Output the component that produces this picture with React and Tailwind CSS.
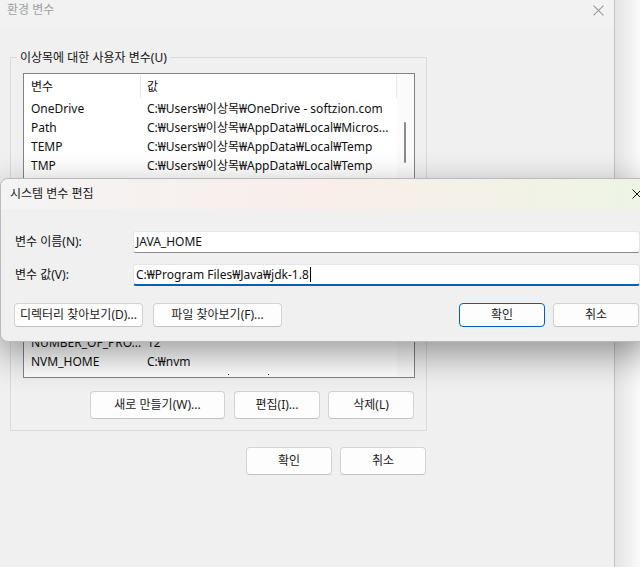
import React from "react";

const F = "font-['Noto_Sans','Noto_Sans_CJK_KR',sans-serif]";

function Btn({ children, className = "", primary = false }) {
  const border = primary
    ? "border-[#005fb8]"
    : "border-[#d3d3d3] border-b-[#c2c2c2]";
  return (
    <div
      className={`flex items-center justify-center bg-[#fdfdfd] border ${border} rounded-[4px] text-[12px] text-[#1b1b1b] shrink-0 ${className}`}
    >
      {children}
    </div>
  );
}

function XIcon({ color = "#000", size = 10 }) {
  return (
    <svg width={size} height={size} viewBox="0 0 10 10" fill="none">
      <path d="M0.5 0.5L9.5 9.5M9.5 0.5L0.5 9.5" stroke={color} strokeWidth="1" />
    </svg>
  );
}

function Row({ name, value }) {
  return (
    <div className="h-[19px] flex items-center shrink-0 whitespace-nowrap">
      <div className="w-[117px] pl-[7px] overflow-hidden">{name}</div>
      <div className="flex-1 pl-[6px] overflow-hidden">{value}</div>
    </div>
  );
}

export default function App() {
  return (
    <div className={`relative w-[640px] h-[567px] overflow-hidden flex bg-[#f5f5f5] text-[12px] text-[#111] ${F}`}>
      {/* background window */}
      <div className="w-[615px] h-full bg-[#f0f0f0] border-r border-[#c4c4c4] flex flex-col shrink-0">
        <div className="h-[27px] bg-[#f2f2f2] flex items-start justify-between pl-[7px] pr-[10px] shrink-0">
          <span className="mt-[2px] leading-[16px] text-[#a0a0a0] text-[12px]">환경 변수</span>
          <div className="mt-[5px]">
            <XIcon color="#9a9a9a" size={11} />
          </div>
        </div>

        {/* group box */}
        <div className="relative mt-[30px] ml-[10px] w-[417px] h-[374px] border border-[#dadada] flex flex-col pt-[15px] pl-[12px] pr-[12px] shrink-0">
          <span className="absolute left-[6px] -top-[8px] px-[3px] leading-[16px] bg-[#f0f0f0]">
            이상목에 대한 사용자 변수(U)
          </span>
          {/* list */}
          <div className="w-[392px] h-[305px] border border-[#838383] bg-white flex overflow-hidden shrink-0">
            <div className="flex-1 flex flex-col min-w-0">
              <div className="h-[25px] flex items-stretch shrink-0">
                <div className="w-[117px] pl-[7px] flex items-center border-r border-[#e8e8e8] my-[1px]">변수</div>
                <div className="flex-1 pl-[6px] flex items-center border-r border-[#e8e8e8] my-[1px]">값</div>
              </div>
              <Row name="OneDrive" value="C:₩Users₩이상목₩OneDrive - softzion.com" />
              <Row name="Path" value="C:₩Users₩이상목₩AppData₩Local₩Micros..." />
              <Row name="TEMP" value="C:₩Users₩이상목₩AppData₩Local₩Temp" />
              <Row name="TMP" value="C:₩Users₩이상목₩AppData₩Local₩Temp" />
              <div className="flex-1" />
              <Row name="NUMBER_OF_PRO..." value="12" />
              <Row name="NVM_HOME" value="C:₩nvm" />
              <div className="h-[6px] shrink-0 flex items-end">
                <span className="ml-[204px] mb-[2px] w-[1px] h-[1px] bg-[#333]" />
                <span className="ml-[39px] mb-[2px] w-[1px] h-[1px] bg-[#333]" />
              </div>
            </div>
            <div className="w-[17px] bg-[#fbfbfb] flex flex-col shrink-0 pt-[48px]">
              <div className="ml-[7px] w-[2px] h-[41px] rounded-full bg-[#8a8a8a]" />
            </div>
          </div>
          {/* buttons */}
          <div className="mt-[13px] flex justify-end">
            <Btn className="w-[135px] h-[28px]">새로 만들기(W)...</Btn>
            <Btn className="w-[86px] h-[28px] ml-[9px]">편집(I)...</Btn>
            <Btn className="w-[86px] h-[28px] ml-[8px]">삭제(L)</Btn>
          </div>
        </div>

        <div className="mt-[16px] ml-[10px] w-[417px] flex justify-end gap-[8px] pr-[1px] shrink-0">
          <Btn className="w-[86px] h-[28px]">확인</Btn>
          <Btn className="w-[86px] h-[28px]">취소</Btn>
        </div>
      </div>
      <div className="flex-1 bg-gradient-to-r from-[#e4e4e4] to-[#fafafa]" />

      {/* edit dialog */}
      <div className="absolute left-0 top-[178px] w-[652px] h-[164px] rounded-[8px] border border-[#b9b9b9] bg-[#f0f0f0] shadow-[0_12px_36px_rgba(0,0,0,0.4)] overflow-hidden flex flex-col">
        <div className="h-[30px] shrink-0 flex items-center justify-between pl-[9px] pr-[9px] bg-gradient-to-r from-[#f4f4f4] via-[#f9eeea] to-[#edf5e5]">
          <span className="text-[12px] text-[#1a1a1a]">시스템 변수 편집</span>
          <XIcon color="#111" size={10} />
        </div>
        <div className="flex flex-col pt-[22px]">
          <div className="flex items-center h-[22px]">
            <div className="w-[132px] pl-[14px]">변수 이름(N):</div>
            <div className="w-[507px] h-[22px] bg-white border border-[#e6e6e6] border-b-[#888] rounded-[3px] pl-[2px] flex items-center">
              JAVA_HOME
            </div>
          </div>
          <div className="flex items-center h-[22px] mt-[11px]">
            <div className="w-[132px] pl-[14px]">변수 값(V):</div>
            <div className="w-[507px] h-[22px] bg-white border border-[#e6e6e6] border-b-2 border-b-[#005fb8] rounded-[3px] pl-[2px] flex items-center">
              <span>C:₩Program Files₩Java₩jdk-1.8</span>
              <span className="w-[1px] h-[15px] bg-black ml-[1px]" />
            </div>
          </div>
          <div className="flex items-center h-[24px] mt-[17px] pl-[13px]">
            <Btn className="w-[129px] h-[24px]">디렉터리 찾아보기(D)...</Btn>
            <Btn className="w-[129px] h-[24px] ml-[10px]">파일 찾아보기(F)...</Btn>
            <Btn primary className="w-[86px] h-[24px] ml-[177px]">확인</Btn>
            <Btn className="w-[86px] h-[24px] ml-[8px]">취소</Btn>
          </div>
        </div>
      </div>
    </div>
  );
}
